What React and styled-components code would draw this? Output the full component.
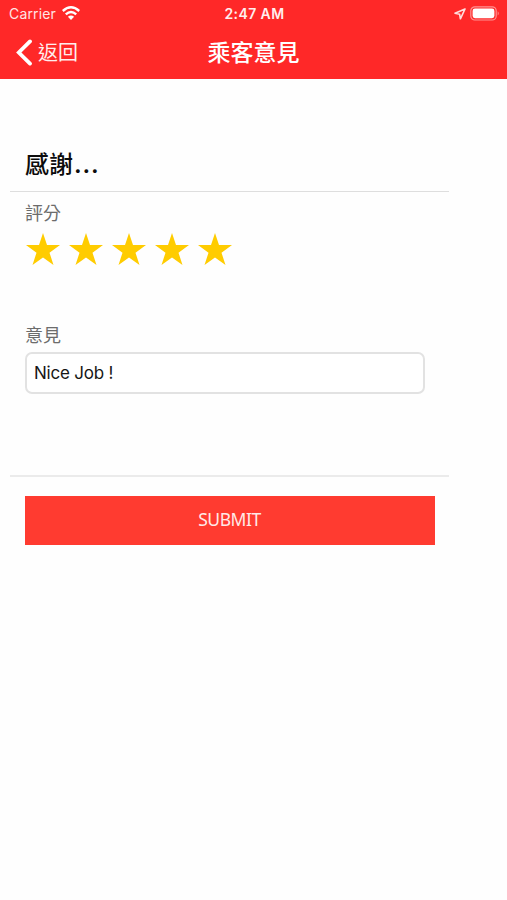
import React, { useState } from "react";
import styled, { createGlobalStyle } from "styled-components";

const GlobalStyle = createGlobalStyle`
  * {
    box-sizing: border-box;
  }
  body {
    margin: 0;
    background: #fefefe;
    font-family: Inter, "Noto Sans CJK TC", sans-serif;
  }
`;

const Screen = styled.div`
  min-height: 900px;
`;

const Header = styled.header`
  height: 79px;
  color: #fff;
  background: #ff2828;
`;

const StatusBar = styled.div`
  display: grid;
  grid-template-columns: 1fr auto 1fr;
  align-items: center;
  height: 27px;
  padding: 0 7px 0 9px;
`;

const StatusGroup = styled.div`
  display: flex;
  align-items: center;
  gap: ${({ $gap }) => $gap}px;
  justify-content: ${({ $end }) => ($end ? "flex-end" : "flex-start")};
`;

const Carrier = styled.span`
  font-size: 14px;
  line-height: 27px;
  letter-spacing: 0.15px;
  opacity: 0.88;
`;

const Clock = styled.span`
  font-size: 14px;
  font-weight: 600;
  line-height: 27px;
  letter-spacing: 0.4px;
  opacity: 0.92;
`;

const NavBar = styled.div`
  display: grid;
  grid-template-columns: 1fr auto 1fr;
  align-items: center;
  height: 50px;
  padding: 0 16px;
`;

const BackButton = styled.button`
  display: flex;
  align-items: center;
  gap: 5px;
  padding: 0;
  border: none;
  color: #fff;
  background: none;
  font-family: inherit;
  font-size: 20px;
  line-height: 30px;
`;

const BackText = styled.span`
  padding-top: 2px;
  opacity: 0.92;
`;

const Title = styled.h1`
  margin: 0;
  padding-top: 2px;
  font-size: 23px;
  font-weight: 500;
  line-height: 34px;
`;

const Form = styled.form`
  width: 439px;
  margin-left: 10px;
  padding-top: 65px;
`;

const Heading = styled.h2`
  height: 48px;
  margin: 0;
  padding: 2px 0 0 15px;
  border-bottom: 1px solid #dedede;
  color: #0c0c0c;
  font-size: 24px;
  font-weight: 500;
  line-height: 38px;
`;

const Dots = styled.span`
  margin-left: 1px;
  font-weight: 600;
  letter-spacing: 0.9px;
`;

const Section = styled.section`
  height: ${({ $height }) => $height}px;
  padding: ${({ $top }) => $top}px 24px 0 15px;
`;

const Label = styled.label`
  display: block;
  color: #6c6c6c;
  font-size: 18px;
  line-height: 26px;
`;

const Stars = styled.div`
  display: flex;
  gap: 8.9px;
  padding: 6px 0 0 1.4px;
`;

const Star = styled.svg`
  display: block;
  width: 34px;
  height: 32px;
  cursor: pointer;
  fill: ${({ $active }) => ($active ? "#ffcc00" : "#dddddd")};
`;

const Input = styled.input`
  display: block;
  width: 400px;
  height: 42px;
  margin-top: 3px;
  padding: 0 7px;
  border: 2px solid #e2e2e2;
  border-radius: 7px;
  outline: none;
  color: #161616;
  background: #fff;
  font-family: Inter, "Noto Sans CJK TC", sans-serif;
  font-size: 17px;
  letter-spacing: -0.2px;
`;

const Footer = styled.div`
  padding: 19px 14px 0 15px;
  border-top: 2px solid #ebebeb;
`;

const Submit = styled.button`
  display: block;
  width: 100%;
  height: 49px;
  padding: 0 1px 4px 0;
  border: none;
  color: #ffe9e7;
  background: #ff3b30;
  font-family: "Noto Sans", sans-serif;
  font-size: 17.5px;
  letter-spacing: -0.45px;
`;

const Wifi = () => (
  <svg width="18" height="16" viewBox="0 0 18 16" fill="none" stroke="#fff" strokeWidth="2.4">
    <path d="M0.8 5 Q9 -2.4 17.2 5" />
    <path d="M3.8 8.4 Q9 3.6 14.2 8.4" />
    <path d="M9 14 L5.9 10.8 Q9 8.2 12.1 10.8 Z" fill="#fff" stroke="none" />
  </svg>
);

const LocationArrow = () => (
  <svg width="12" height="12" viewBox="0 0 12 12" fill="none" stroke="#ffdddd" strokeWidth="1.6" strokeLinejoin="round">
    <path d="M11 1 L1 5.2 L5.6 6.2 L6.4 10.8 Z" />
  </svg>
);

const Battery = () => (
  <svg width="30" height="15" viewBox="0 0 30 15">
    <rect x="0.8" y="0.8" width="25.4" height="13.2" rx="4" fill="none" stroke="#ff9292" strokeWidth="1.2" />
    <rect x="2.6" y="2.6" width="21.8" height="9.6" rx="2.4" fill="#fff" />
    <path d="M27.7 5.2 Q29.8 7.4 27.7 9.6 Z" fill="#ff9292" />
  </svg>
);

const Chevron = () => (
  <svg width="17" height="27" viewBox="0 0 17 27" fill="none" stroke="#fff" strokeWidth="3.8" strokeLinecap="round">
    <path d="M14 2.4 L2.8 13.5 L14 24.6" />
  </svg>
);

const App = () => {
  const [rating, setRating] = useState(5);
  const [comment, setComment] = useState("Nice Job !");

  const handleSubmit = (e) => {
    e.preventDefault();
  };

  return (
    <Screen>
      <GlobalStyle />
      <Header>
        <StatusBar>
          <StatusGroup $gap={6}>
            <Carrier>Carrier</Carrier>
            <Wifi />
          </StatusGroup>
          <Clock>2:47 AM</Clock>
          <StatusGroup $gap={4} $end>
            <LocationArrow />
            <Battery />
          </StatusGroup>
        </StatusBar>
        <NavBar>
          <BackButton>
            <Chevron />
            <BackText>返回</BackText>
          </BackButton>
          <Title>乘客意見</Title>
        </NavBar>
      </Header>
      <Form onSubmit={handleSubmit}>
        <Heading>
          感謝<Dots>...</Dots>
        </Heading>
        <Section $height={121} $top={9}>
          <Label>評分</Label>
          <Stars>
            {[1, 2, 3, 4, 5].map((n) => (
              <Star key={n} viewBox="0 0 34 32" $active={n <= rating} onClick={() => setRating(n)}>
                <path d="M17 0 L21 12.1 H34 L23.5 19.7 L27.5 32 L17 24.5 L6.5 32 L10.5 19.7 L0 12.1 H13 Z" />
              </Star>
            ))}
          </Stars>
        </Section>
        <Section $height={162} $top={10}>
          <Label htmlFor="comment">意見</Label>
          <Input id="comment" value={comment} onChange={(e) => setComment(e.target.value)} />
        </Section>
        <Footer>
          <Submit type="submit">SUBMIT</Submit>
        </Footer>
      </Form>
    </Screen>
  );
};

export default App;
